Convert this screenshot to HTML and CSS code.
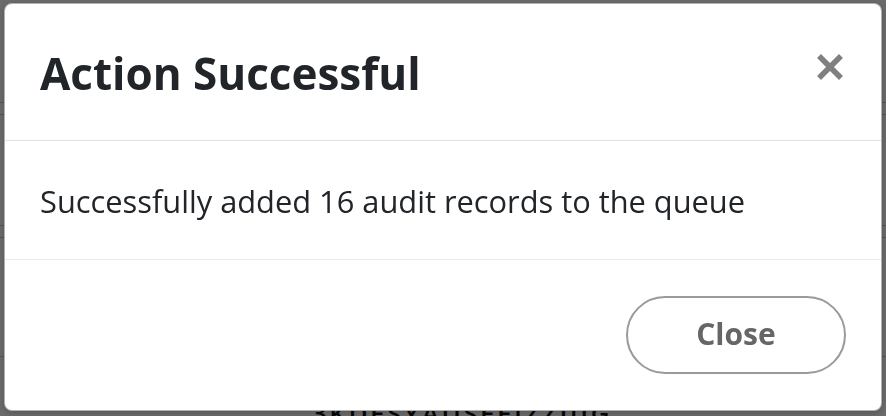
FILE: index.html
```html
<!DOCTYPE html>
<html lang="en">
<head>
<meta charset="utf-8">
<title>Action Successful</title>
<link rel="stylesheet" href="styles.css">
</head>
<body>
<div class="page">
  <div class="row r1"></div>
  <div class="row r2"></div>
  <div class="row r3"></div>
  <div class="row r4"></div>
  <div class="row r5"></div>
  <div class="page-title">3KDESYAUSEEIZZIIIG</div>
</div>
<div class="backdrop"></div>
<div class="modal" role="dialog">
  <div class="modal-header">
    <h4 class="modal-title">Action Successful</h4>
    <button class="btn-x" aria-label="Close">
      <svg width="26" height="26" viewBox="0 0 26 26"><path d="M4 4 L22 22 M22 4 L4 22" stroke="#808080" stroke-width="5.6" stroke-linecap="square" fill="none"/></svg>
    </button>
  </div>
  <div class="modal-body">Successfully added 16 audit records to the queue</div>
  <div class="modal-footer">
    <button class="btn-close">Close</button>
  </div>
</div>
</body>
</html>
```
FILE: styles.css
```css
html, body {
  margin: 0;
  padding: 0;
  width: 886px;
  height: 416px;
  overflow: hidden;
  background: #fff;
  font-family: "Open Sans", "Liberation Sans", sans-serif;
}
.page {
  display: flex;
  flex-direction: column;
}
.row {
  border-bottom: 1px solid #c8c8c8;
}
.r1 { height: 102px; }
.r2 { height: 11px; }
.r3 { height: 110px; }
.r4 { height: 11px; }
.r5 { height: 118px; }
.page-title {
  padding-left: 312px;
  margin-top: 41px;
  font-size: 26px;
  font-weight: 600;
  color: #111;
  letter-spacing: 2.5px;
  line-height: 30px;
}
.backdrop {
  position: fixed;
  inset: 0;
  background: rgba(0, 0, 0, 0.58);
}
.modal {
  position: absolute;
  left: 4px;
  top: 3px;
  width: 878px;
  height: 408px;
  box-sizing: border-box;
  background: #fff;
  border: 1px solid rgba(0, 0, 0, 0.3);
  border-radius: 8px;
  display: flex;
  flex-direction: column;
  box-shadow: 0 2px 6px rgba(0, 0, 0, 0.2);
}
.modal-header {
  display: flex;
  justify-content: space-between;
  align-items: flex-start;
  padding: 44px 35px 42px 35px;
  border-bottom: 1px solid #dee2e6;
}
.modal-title {
  margin: 0;
  font-size: 44px;
  line-height: 50px;
  font-weight: 700;
  color: #212529;
}
.btn-x {
  margin: 6px 3px 0 0;
  padding: 0;
  border: 0;
  background: none;
  width: 26px;
  height: 26px;
  display: flex;
}
.modal-body {
  padding: 38px 35px 35px 35px;
  font-size: 30.8px;
  line-height: 45px;
  color: #212529;
  border-bottom: 1px solid #e9ecef;
}
.modal-footer {
  display: flex;
  justify-content: flex-end;
  padding: 36px 35px 36px 35px;
}
.btn-close {
  width: 220px;
  height: 78px;
  box-sizing: border-box;
  border: 2px solid #9a9a9a;
  border-radius: 39px;
  background: #fff;
  font-family: "Open Sans", "Liberation Sans", sans-serif;
  font-size: 30px;
  font-weight: 700;
  color: #666;
  padding: 0 0 4px 0;
}
```
